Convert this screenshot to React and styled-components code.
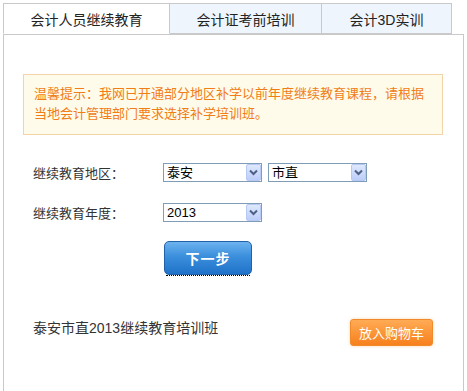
import React, { useState } from "react";
import styled, { createGlobalStyle } from "styled-components";

const GlobalStyle = createGlobalStyle`
  body {
    margin: 0;
    background: #fff;
    font-family: "Liberation Sans", "Noto Sans CJK SC", sans-serif;
    color: #333;
  }
`;

const Wrapper = styled.div`
  padding: 3px 3px 0 3px;
`;

const TabBar = styled.div`
  display: flex;
  height: 31px;
  border-bottom: 1px solid #c9c9c9;
`;

const Tab = styled.div`
  width: ${(p) => p.$w}px;
  height: 31px;
  box-sizing: border-box;
  margin-bottom: -1px;
  border: 1px solid #c9c9c9;
  border-left: ${(p) => (p.$first ? "1px solid #c9c9c9" : "none")};
  border-bottom: 1px solid ${(p) => (p.$active ? "#fff" : "#c9c9c9")};
  background: ${(p) => (p.$active ? "#fff" : "#eef5fd")};
  display: flex;
  align-items: center;
  justify-content: center;
  font-size: 14px;
  color: #222;
  cursor: pointer;
`;

const Panel = styled.div`
  box-sizing: border-box;
  border-left: 1px solid #c9c9c9;
  border-right: 1px solid #c9c9c9;
  height: 356px;
  padding-top: 39px;
`;

const Notice = styled.div`
  margin: 0 20px 0 19px;
  padding: 9px 10px 10px 10px;
  background: #fffbea;
  border: 1px solid #f2d4a8;
  color: #f07d16;
  font-size: 13px;
  line-height: 20px;
`;

const Form = styled.div`
  padding: 28px 30px 0 29px;
`;

const Row = styled.div`
  display: flex;
  align-items: center;
  height: 19px;
  margin-bottom: ${(p) => p.$mb || 0}px;
`;

const Label = styled.div`
  width: 130px;
  font-size: 13px;
  color: #333;
`;

const SelectWrap = styled.div`
  position: relative;
  width: 99px;
  height: 19px;
  margin-right: 6px;
`;

const Select = styled.select`
  appearance: none;
  width: 100%;
  height: 100%;
  box-sizing: border-box;
  border: 1px solid #7f9db9;
  background: #fff;
  font-family: "Liberation Sans", "Noto Sans CJK SC", sans-serif;
  font-size: 13px;
  color: #000;
  padding: 0 0 0 3px;
  border-radius: 0;
  outline: none;
`;

const Arrow = styled.span`
  position: absolute;
  right: 1px;
  top: 1px;
  width: 15px;
  height: 17px;
  box-sizing: border-box;
  border: 1px solid #b6c8f4;
  border-radius: 2px;
  background: linear-gradient(#dfe8fd, #bccdf9);
  display: flex;
  align-items: center;
  justify-content: center;
  pointer-events: none;
`;

const NextButton = styled.button`
  position: relative;
  margin: 19px 0 0 131px;
  width: 88px;
  height: 34px;
  border: 1px solid #2261a6;
  border-radius: 5px;
  background: linear-gradient(#6cb3ef 0%, #3b8fdc 45%, #1f72c8 100%);
  color: #fff;
  font-family: "Noto Sans CJK SC", sans-serif;
  font-size: 14px;
  font-weight: bold;
  letter-spacing: 1px;
  cursor: pointer;
  &::after {
    content: "";
    position: absolute;
    left: 1px;
    right: 1px;
    bottom: -2px;
    border-bottom: 1px dotted #000;
  }
`;

const ProductRow = styled.div`
  display: flex;
  justify-content: space-between;
  align-items: flex-start;
  margin-top: 43px;
`;

const ProductName = styled.div`
  font-size: 14px;
  line-height: 20px;
  color: #333;
`;

const CartButton = styled.button`
  margin-top: 1px;
  width: 83px;
  height: 27px;
  border: 1px solid #f08a2a;
  border-radius: 3px;
  background: linear-gradient(#ffab55, #f7801c);
  box-shadow: 0 0 3px rgba(250, 170, 90, 0.5);
  color: #fff;
  font-family: "Noto Sans CJK SC", sans-serif;
  font-size: 13px;
  padding: 0;
  cursor: pointer;
`;

const Chevron = () => (
  <svg width="9" height="7" viewBox="0 0 9 7">
    <path d="M1 1.5 L4.5 5 L8 1.5" fill="none" stroke="#4d6185" strokeWidth="2" />
  </svg>
);

const Dropdown = ({ value, options }) => (
  <SelectWrap>
    <Select defaultValue={value}>
      {options.map((o) => (
        <option key={o}>{o}</option>
      ))}
    </Select>
    <Arrow>
      <Chevron />
    </Arrow>
  </SelectWrap>
);

const tabs = [
  { name: "会计人员继续教育", w: 167 },
  { name: "会计证考前培训", w: 152 },
  { name: "会计3D实训", w: 130 },
];

export default function App() {
  const [active, setActive] = useState(0);

  return (
    <Wrapper>
      <GlobalStyle />
      <TabBar>
        {tabs.map((t, i) => (
          <Tab
            key={t.name}
            $w={t.w}
            $first={i === 0}
            $active={i === active}
            onClick={() => setActive(i)}
          >
            {t.name}
          </Tab>
        ))}
      </TabBar>
      <Panel>
        <Notice>
          温馨提示：我网已开通部分地区补学以前年度继续教育课程，请根据当地会计管理部门要求选择补学培训班。
        </Notice>
        <Form>
          <Row $mb={21}>
            <Label>继续教育地区：</Label>
            <Dropdown value="泰安" options={["泰安", "济南", "青岛"]} />
            <Dropdown value="市直" options={["市直", "泰山区", "岱岳区"]} />
          </Row>
          <Row>
            <Label>继续教育年度：</Label>
            <Dropdown value="2013" options={["2013", "2012", "2011"]} />
          </Row>
          <NextButton>下一步</NextButton>
          <ProductRow>
            <ProductName>泰安市直2013继续教育培训班</ProductName>
            <CartButton>放入购物车</CartButton>
          </ProductRow>
        </Form>
      </Panel>
    </Wrapper>
  );
}
